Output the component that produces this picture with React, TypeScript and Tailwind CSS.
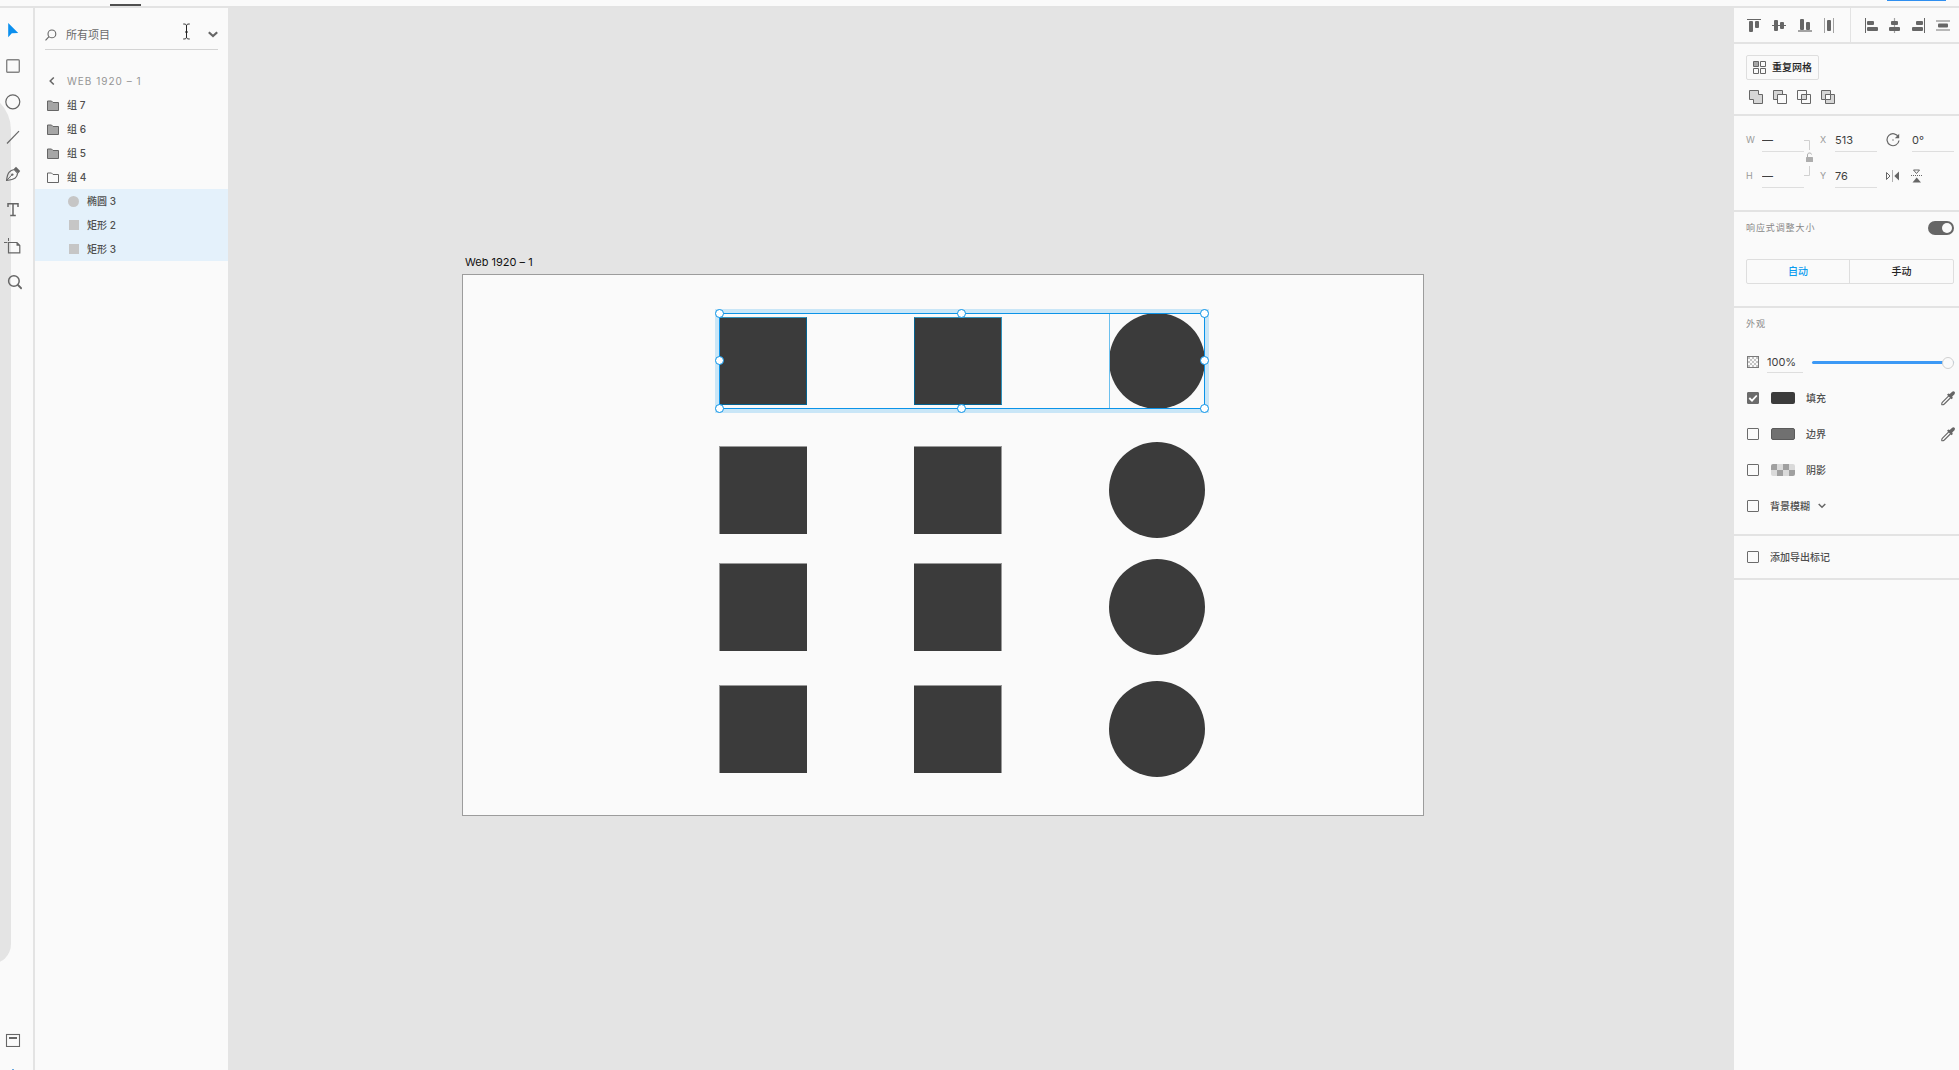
import React, { useState } from "react";

const G = "#666666";

type IconProps = { w: number; h: number; children: React.ReactNode };

function Icon({ w, h, children }: IconProps) {
  return (
    <svg width={w} height={h} viewBox={`0 0 ${w} ${h}`} fill="none" className="block shrink-0" aria-hidden="true">
      {children}
    </svg>
  );
}

const tools = [
  {
    name: "选择",
    pad: "pl-[5px]",
    icon: (
      <Icon w={16} h={16}>
        <path d="M3.2 1v14.2l3.6-3.9 6.4-.4z" fill="#0b8fee" />
      </Icon>
    ),
  },
  {
    name: "矩形",
    pad: "pl-[5px]",
    icon: (
      <Icon w={16} h={16}>
        <rect x="1.7" y="1.7" width="12.6" height="12.6" rx="1" stroke="#858585" strokeWidth="1.4" />
      </Icon>
    ),
  },
  {
    name: "椭圆",
    pad: "pl-[5px]",
    icon: (
      <Icon w={16} h={16}>
        <circle cx="7.8" cy="7.8" r="7" stroke={G} strokeWidth="1.2" />
      </Icon>
    ),
  },
  {
    name: "直线",
    pad: "pl-[5px]",
    icon: (
      <Icon w={16} h={16}>
        <path d="M2 13.5L14 1.2" stroke={G} strokeWidth="1.2" />
      </Icon>
    ),
  },
  {
    name: "钢笔",
    pad: "pl-[5px]",
    icon: (
      <Icon w={16} h={16}>
        <path d="M1.6 14.4C2 10.5 2.6 8 4 6.3c1.5-1.8 3.5-2.5 5.3-2.8l3.3 3.6c-.2 2-1 3.7-2.4 4.9-1.8 1.4-4.6 2-8.600 2.400z" stroke={G} strokeWidth="1.2" />
        <path d="M1.8 14.2L6.8 9" stroke={G} strokeWidth="1" />
        <circle cx="7.3" cy="8.600" r="1.2" fill={G} />
        <path d="M9 2.700L11 .8l4.200 4.300-1.700 2.200z" fill={G} />
      </Icon>
    ),
  },
  {
    name: "文本",
    pad: "pl-[5px]",
    icon: (
      <Icon w={16} h={16}>
        <path d="M3 5V1.800h10V5M8 1.800v11.800M5.200 13.600h5.600" stroke={G} strokeWidth="1.500" />
      </Icon>
    ),
  },
  {
    name: "画板",
    pad: "pl-1",
    icon: (
      <Icon w={18} h={16}>
        <path d="M0 4.500h3.400M4.500 0v3" stroke={G} strokeWidth="1" />
        <path d="M4.500 4.500h8.500l2.800 3v7.300H4.500z" stroke={G} strokeWidth="1.200" />
        <path d="M12.500 4.200v3.600h3.600z" fill={G} />
      </Icon>
    ),
  },
  {
    name: "缩放",
    pad: "pl-1.5",
    icon: (
      <Icon w={16} h={16}>
        <circle cx="7.900" cy="7" r="5.300" stroke={G} strokeWidth="1.500" />
        <path d="M11.700 10.800l4 3.900" stroke={G} strokeWidth="1.900" />
      </Icon>
    ),
  },
];

function Toolbar() {
  return (
    <nav aria-label="工具" className="relative flex w-[35px] shrink-0 flex-col overflow-hidden border-r-2 border-[#e3e3e3] pt-1">
      <div className="absolute -left-7 bottom-[106px] top-[83px] w-[39px] rounded-tr-[39px] rounded-br-[20px] bg-[#e4e4e4]" />
      {tools.map((t) => (
        <button key={t.name} type="button" aria-label={t.name} className={`relative flex h-9 w-full items-center ${t.pad}`}>
          {t.icon}
        </button>
      ))}
      <div className="mt-auto">
        <button type="button" aria-label="图层" className="flex h-9 w-full items-center pl-[5px]">
          <Icon w={16} h={14}>
            <rect x="1.500" y="1.500" width="13" height="12" stroke={G} strokeWidth="1.100" />
            <path d="M4 5h8" stroke={G} strokeWidth="2" />
          </Icon>
        </button>
        <div className="flex h-3 items-end pl-3">
          <span className="h-px w-0.5 bg-[#6aa8e0]" />
        </div>
      </div>
    </nav>
  );
}

function Folder({ open }: { open?: boolean }) {
  return (
    <Icon w={12} h={11}>
      <path d="M.5 1h4l1.500 1.500h5.500v8H.5z" fill={open ? "none" : "#a6a6a6"} stroke={G} strokeWidth="1" strokeLinejoin="round" />
    </Icon>
  );
}

const groups = [
  { name: "组 7", open: false },
  { name: "组 6", open: false },
  { name: "组 5", open: false },
  { name: "组 4", open: true },
];

const children = [
  { name: "椭圆 3", round: true },
  { name: "矩形 2", round: false },
  { name: "矩形 3", round: false },
];

function LayersPanel() {
  return (
    <aside className="flex w-[193px] shrink-0 flex-col">
      <div className="relative mx-[10px] mt-3 flex h-[30px] items-center border-b border-[#d4d4d4]">
        <Icon w={12} h={12}>
          <circle cx="6.900" cy="4.900" r="3.900" stroke={G} strokeWidth="1.100" />
          <path d="M4 7.700L.5 11.400" stroke={G} strokeWidth="1.100" />
        </Icon>
        <input
          aria-label="搜索图层"
          placeholder="所有项目"
          className="ml-[9px] min-w-0 flex-1 bg-transparent pt-0.5 text-[11px] text-[#6b6b6b] outline-none placeholder:text-[#6b6b6b]"
        />
        <button type="button" aria-label="筛选" className="flex h-5 w-[10px] items-center justify-center">
          <Icon w={10} h={7}>
            <path d="M.8 1.200L5 5l4.200-3.800" stroke={G} strokeWidth="2.200" />
          </Icon>
        </button>
        <div className="pointer-events-none absolute right-7 top-[3px]">
          <Icon w={7} h={17}>
            <path d="M.3 1c2 0 3.200.4 3.200 1.800v11.400c0 1.400-1.200 1.800-3.200 1.800M6.700 1c-2 0-3.200.4-3.200 1.800M6.700 16c-2 0-3.200-.4-3.200-1.800M2 9h3" stroke="#222" strokeWidth="1" />
          </Icon>
        </div>
      </div>
      <button type="button" className="mt-[19px] flex h-6 items-center pl-3.5 text-left">
        <Icon w={6} h={8}>
          <path d="M4.800.5L1.200 4l3.600 3.500" stroke={G} strokeWidth="1.500" />
        </Icon>
        <span className="ml-3 text-[10px] tracking-widest text-[#959595]">WEB 1920 – 1</span>
      </button>
      <ul>
        {groups.map((g) => (
          <li key={g.name}>
            <button type="button" className="flex h-6 w-full items-center gap-2 pl-3 text-[10px] font-medium text-[#4f4f4f]">
              <Folder open={g.open} />
              {g.name}
            </button>
          </li>
        ))}
        {children.map((c) => (
          <li key={c.name} className="bg-[#e4f1fb]">
            <button type="button" className="flex h-6 w-full items-center gap-2 pl-[33px] text-[10px] font-medium text-[#4f4f4f]">
              <span className="flex w-[11px] justify-center">
                <span className={c.round ? "size-[11px] rounded-full bg-[#c6c6c6]" : "size-[10px] bg-[#c6c6c6]"} />
              </span>
              {c.name}
            </button>
          </li>
        ))}
      </ul>
    </aside>
  );
}

function Handle({ place }: { place: string }) {
  return <span className={`absolute size-[9px] rounded-full border border-[#0b93e8] bg-white ${place}`} />;
}

const rowTops = ["top-[167px]", "top-[284px]", "top-[406px]"];

function Square({ first }: { first?: boolean }) {
  return <span className={`mt-1 size-[88px] border-t border-[#999] bg-[#3b3b3b] ${first ? "border-l" : "border-r"}`} />;
}

function Canvas() {
  return (
    <main className="relative min-w-0 flex-1 overflow-hidden bg-[#e4e4e4]">
      <div className="absolute left-[237px] top-[246px] text-[11px] leading-4 text-[#111]">Web 1920 – 1</div>
      <div className="absolute left-[234px] top-[266px] h-[542px] w-[962px] border border-[#9c9c9c] bg-[#fafafa]">
        {rowTops.map((top) => (
          <div key={top} className={`absolute left-[256px] flex w-[486px] justify-between ${top}`}>
            <Square first />
            <Square />
            <span className="size-24 rounded-full bg-[#3b3b3b]" />
          </div>
        ))}
        <div className="absolute left-[252px] top-[34px] border-4 border-[#c9e6f7]">
          <div className="relative h-24 w-[486px]">
            <div className="flex justify-between">
              <span className="mt-1 size-[88px] border border-[#04628f] border-t-[#2e92bd] bg-[#3b3b3b]" />
              <span className="mt-1 size-[88px] border border-[#04628f] border-r-[#2e92bd] border-t-[#2e92bd] bg-[#3b3b3b]" />
              <span className="relative size-24 rounded-full bg-[#3b3b3b]">
                <span className="absolute inset-y-0 left-0 w-px bg-[#6cc0ee]" />
              </span>
            </div>
            <div className="absolute inset-0 border border-[#0b93e8]" />
            <Handle place="-left-1 -top-1" />
            <Handle place="left-[238px] -top-1" />
            <Handle place="-right-1 -top-1" />
            <Handle place="-left-1 top-[43px]" />
            <Handle place="-right-1 top-[43px]" />
            <Handle place="-left-1 -bottom-1" />
            <Handle place="left-[238px] -bottom-1" />
            <Handle place="-right-1 -bottom-1" />
          </div>
        </div>
      </div>
    </main>
  );
}

const L = "#a3a3a3";

const alignVertical = [
  {
    name: "顶对齐",
    icon: (
      <Icon w={16} h={16}>
        <path d="M1 2.500h14" stroke={G} strokeWidth="1" />
        <rect x="3" y="4" width="4" height="11" rx="1" fill={G} />
        <rect x="9" y="4" width="4" height="7" rx="1" fill={G} />
      </Icon>
    ),
  },
  {
    name: "垂直居中",
    icon: (
      <Icon w={16} h={16}>
        <path d="M1 8.500h14" stroke={G} strokeWidth="1" />
        <rect x="3" y="3" width="4" height="11" rx="1" fill={G} />
        <rect x="9" y="5" width="4" height="7" rx="1" fill={G} />
      </Icon>
    ),
  },
  {
    name: "底对齐",
    icon: (
      <Icon w={16} h={16}>
        <path d="M2 14h14" stroke={L} strokeWidth="2" />
        <rect x="4" y="2" width="4" height="11" rx="1" fill={G} />
        <rect x="10" y="5" width="4" height="8" rx="1" fill={G} />
      </Icon>
    ),
  },
  {
    name: "水平分布",
    icon: (
      <Icon w={16} h={16}>
        <path d="M3.500 1v15M12.500 1v15" stroke={L} strokeWidth="1" />
        <rect x="6" y="3" width="4" height="11" rx="1" fill={G} />
      </Icon>
    ),
  },
];

const alignHorizontal = [
  {
    name: "左对齐",
    icon: (
      <Icon w={16} h={16}>
        <path d="M2.500 1v15" stroke={G} strokeWidth="1" />
        <rect x="4" y="4" width="7" height="4" rx="1" fill={G} />
        <rect x="4" y="10" width="11" height="4" rx="1" fill={G} />
      </Icon>
    ),
  },
  {
    name: "水平居中",
    icon: (
      <Icon w={16} h={16}>
        <path d="M7.500 1v15" stroke={L} strokeWidth="1.200" />
        <rect x="4" y="4" width="7" height="4" rx="1" fill={G} />
        <rect x="2" y="10" width="11" height="4" rx="1" fill={G} />
      </Icon>
    ),
  },
  {
    name: "右对齐",
    icon: (
      <Icon w={16} h={16}>
        <path d="M13.500 1v15" stroke={G} strokeWidth="1" />
        <rect x="5" y="4" width="7" height="4" rx="1" fill={G} />
        <rect x="1" y="10" width="11" height="4" rx="1" fill={G} />
      </Icon>
    ),
  },
  {
    name: "垂直分布",
    icon: (
      <Icon w={16} h={16}>
        <path d="M1 4h14M1 13h14" stroke={L} strokeWidth="1.400" />
        <rect x="3" y="6.500" width="10" height="4" rx="1" fill={G} />
      </Icon>
    ),
  },
];

const booleans = [
  {
    name: "相加",
    icon: (
      <Icon w={14} h={14}>
        <path d="M.5.500h9v4h4v9h-9v-4h-4z" fill="#d6d6d6" stroke={G} />
      </Icon>
    ),
  },
  {
    name: "减去",
    icon: (
      <Icon w={14} h={14}>
        <path d="M.5.500h9v9h-9z" fill="#d6d6d6" stroke={G} />
        <path d="M4.500 4.500h9v9h-9z" fill="#fafafa" stroke={G} />
      </Icon>
    ),
  },
  {
    name: "交叉",
    icon: (
      <Icon w={14} h={14}>
        <path d="M4.500 4.500h5v5h-5z" fill="#d6d6d6" />
        <path d="M.5.500h9v9h-9zM4.500 4.500h9v9h-9z" stroke={G} />
      </Icon>
    ),
  },
  {
    name: "排除重叠",
    icon: (
      <Icon w={14} h={14}>
        <path d="M.5.500h9v9h-9zM4.500 4.500h9v9h-9z" fill="#d6d6d6" stroke={G} />
        <path d="M4.500 4.500h5v5h-5z" fill="#fafafa" stroke={G} />
      </Icon>
    ),
  },
];

const fieldInput = "h-[22px] w-full border-b border-[#dedede] bg-transparent pb-0.5 text-[11px] text-[#3f3f3f] outline-none";

function Field({ id, label, value }: { id: string; label: string; value: string }) {
  return (
    <>
      <label htmlFor={id} className="pb-0.5 text-[9px] text-[#999]">
        {label}
      </label>
      <input id={id} defaultValue={value} className={fieldInput} />
    </>
  );
}

function Tick({ id, checked, onChange }: { id: string; checked: boolean; onChange: () => void }) {
  return (
    <span className="grid size-3 shrink-0 place-items-center">
      <input
        id={id}
        type="checkbox"
        checked={checked}
        onChange={onChange}
        className="col-start-1 row-start-1 size-3 appearance-none rounded-[1px] border border-[#6b6b6b] checked:bg-[#6b6b6b]"
      />
      {checked && (
        <svg width="12" height="12" viewBox="0 0 12 12" fill="none" className="pointer-events-none col-start-1 row-start-1">
          <path d="M2.300 6l2.700 2.700L9.800 3.500" stroke="#fff" strokeWidth="1.800" />
        </svg>
      )}
    </span>
  );
}

function Eyedropper() {
  return (
    <button type="button" aria-label="吸管" className="-mr-px ml-auto">
      <Icon w={14} h={15}>
        <path d="M8 4.700L1.500 11.200c-.7.800-.9 1.600-.7 2.500.9.300 1.700 0 2.500-.7L9.800 6.500" stroke={G} strokeWidth="1.100" />
        <path d="M6 3.700l1.400-1.200 1.300.5L10.900.9c.8-.9 2-1 2.600-.2.700.7.600 1.900-.2 2.700L11.200 5.600l.6 1.400L10.600 8.300z" fill={G} />
      </Icon>
    </button>
  );
}

function Checker({ cols, rows, size, a, b }: { cols: number; rows: number; size: number; a: string; b: string }) {
  const cells = [];
  for (let y = 0; y < rows; y++)
    for (let x = 0; x < cols; x++)
      cells.push(<rect key={`${x}-${y}`} x={x * size} y={y * size} width={size} height={size} fill={(x + y) % 2 ? b : a} />);
  return (
    <Icon w={cols * size} h={rows * size}>
      {cells}
    </Icon>
  );
}

const section = "border-b-2 border-[#e3e3e3] pl-3 pr-[5px]";
const row = "flex h-9 items-center pl-px text-[10px] font-medium text-[#4f4f4f]";
const sectionLabel = "text-[9px] tracking-widest text-[#888]";

function Inspector() {
  const [on, setOn] = useState<Record<string, boolean>>({ fill: true });
  const toggle = (k: string) => setOn((s) => ({ ...s, [k]: !s[k] }));
  const [responsive, setResponsive] = useState(true);
  const [opacity, setOpacity] = useState(100);

  return (
    <aside className="flex w-[225px] shrink-0 flex-col">
      <div className="flex h-9 border-b-2 border-[#e3e3e3]">
        <div className="flex w-[117px] items-center gap-[9px] border-r border-[#e3e3e3] pl-3">
          {alignVertical.map((a) => (
            <button key={a.name} type="button" aria-label={a.name}>
              {a.icon}
            </button>
          ))}
        </div>
        <div className="flex items-center gap-2 pl-3">
          {alignHorizontal.map((a) => (
            <button key={a.name} type="button" aria-label={a.name}>
              {a.icon}
            </button>
          ))}
        </div>
      </div>

      <section className={`${section} h-[72px] pt-[11px]`}>
        <button type="button" className="flex h-[25px] items-center gap-[6px] rounded-xs border border-[#dedede] px-1.5 text-[10px] font-medium text-[#222]">
          <Icon w={13} h={13}>
            <path d="M.5.500h5v5h-5z" fill="#a6a6a6" stroke={G} />
            <path d="M7.500.500h5v5h-5zM.5 7.500h5v5h-5zM7.500 7.500h5v5h-5z" stroke={G} />
          </Icon>
          重复网格
        </button>
        <div className="mt-[10px] flex gap-[10px] pl-[3px]">
          {booleans.map((b) => (
            <button key={b.name} type="button" aria-label={b.name}>
              {b.icon}
            </button>
          ))}
        </div>
      </section>

      <section className={`${section} h-24 pt-3.5`}>
        <div className="grid grid-cols-[16px_42px_16px_15px_42px_35px_1fr] items-center gap-y-3.5">
          <Field id="w" label="W" value="—" />
          <div className="row-span-2">
            <Icon w={16} h={44}>
              <path d="M0 3.500h5.500V13M0 38.500h5.500V29" stroke="#d0d0d0" />
              <rect x="2" y="20" width="7" height="5" rx=".5" fill="#adadad" />
              <path d="M3.500 20v-2c0-1.500 1-2 2-2s2 .5 2 1.500" stroke="#adadad" />
            </Icon>
          </div>
          <Field id="x" label="X" value="513" />
          <label htmlFor="angle" aria-label="旋转" className="pb-0.5 pl-[9px]">
            <Icon w={14} h={14}>
              <path d="M12.500 4.200A6 6 0 1 0 13 7.500" stroke={G} strokeWidth="1.200" />
              <path d="M13.200.8v4.400H8.800z" fill={G} />
              <circle cx="7" cy="7" r=".7" fill={G} />
            </Icon>
          </label>
          <input id="angle" defaultValue="0°" className={fieldInput} />
          <Field id="h" label="H" value="—" />
          <Field id="y" label="Y" value="76" />
          <button type="button" aria-label="水平翻转" className="pb-0.5 pl-[9px]">
            <Icon w={14} h={12}>
              <path d="M.5 2.500L4 6 .5 9.500z" stroke={G} />
              <path d="M13 1.500v9L8.300 6z" fill={G} />
              <path d="M6.500.500v11" stroke={G} strokeDasharray="1 1" />
            </Icon>
          </button>
          <button type="button" aria-label="垂直翻转" className="-ml-px pb-0.5">
            <Icon w={12} h={14}>
              <path d="M2.500 1h6L5.500 4.500z" stroke={G} />
              <path d="M1.500 13.500h8.500L5.700 8.500z" fill={G} />
              <path d="M0 6.500h12" stroke={G} strokeDasharray="1 1" />
            </Icon>
          </button>
        </div>
      </section>

      <section className={`${section} h-24 pt-2`}>
        <div className={`flex h-4 items-center justify-between ${sectionLabel}`}>
          <label htmlFor="responsive">响应式调整大小</label>
          <span className="grid h-3.5 w-[26px] items-center">
            <input
              id="responsive"
              type="checkbox"
              role="switch"
              checked={responsive}
              onChange={() => setResponsive(!responsive)}
              className="peer col-start-1 row-start-1 h-3.5 w-[26px] appearance-none rounded-full bg-[#b5b5b5] checked:bg-[#666]"
            />
            <span className="pointer-events-none col-start-1 row-start-1 ml-0.5 size-[10px] rounded-full bg-[#fafafa] peer-checked:ml-3.5" />
          </span>
        </div>
        <div className="mt-[23px] grid h-[25px] grid-cols-2 rounded-xs border border-[#dedede] text-[10px] font-medium">
          <button type="button" className="border-r border-[#dedede] text-[#0b9cf0]">
            自动
          </button>
          <button type="button" className="text-[#222]">
            手动
          </button>
        </div>
      </section>

      <section className={`${section} h-[228px] pt-2`}>
        <h2 className={`h-4 leading-4 ${sectionLabel}`}>外观</h2>
        <div className="mt-3 flex h-9 items-center pl-px">
          <span className="border border-[#7a7a7a]">
            <Checker cols={5} rows={5} size={2} a="#c4c4c4" b="#fafafa" />
          </span>
          <input
            aria-label="不透明度"
            value={`${opacity}%`}
            onChange={(e) => setOpacity(Math.min(100, parseInt(e.target.value) || 0))}
            className="ml-2 h-[22px] w-9 border-b border-[#dedede] bg-transparent text-[11px] text-[#3f3f3f] outline-none"
          />
          <input
            aria-label="不透明度滑块"
            type="range"
            value={opacity}
            onChange={(e) => setOpacity(Number(e.target.value))}
            className="ml-[9px] h-3 min-w-0 flex-1 appearance-none bg-transparent [&::-webkit-slider-runnable-track]:h-[3px] [&::-webkit-slider-runnable-track]:rounded-full [&::-webkit-slider-runnable-track]:bg-[#3c99f5] [&::-webkit-slider-thumb]:-mt-1 [&::-webkit-slider-thumb]:size-3 [&::-webkit-slider-thumb]:appearance-none [&::-webkit-slider-thumb]:rounded-full [&::-webkit-slider-thumb]:border [&::-webkit-slider-thumb]:border-[#d0d0d0] [&::-webkit-slider-thumb]:bg-[#fafafa]"
          />
        </div>
        <div className={row}>
          <Tick id="fill" checked={!!on.fill} onChange={() => toggle("fill")} />
          <button type="button" aria-label="填充颜色" className="ml-3 h-3 w-6 rounded-xs bg-[#3b3b3b]" />
          <label htmlFor="fill" className="ml-[11px]">填充</label>
          <Eyedropper />
        </div>
        <div className={row}>
          <Tick id="stroke" checked={!!on.stroke} onChange={() => toggle("stroke")} />
          <button type="button" aria-label="边界颜色" className="ml-3 h-3 w-6 rounded-xs border border-[#5a5a5a] bg-[#707070]" />
          <label htmlFor="stroke" className="ml-[11px]">边界</label>
          <Eyedropper />
        </div>
        <div className={row}>
          <Tick id="shadow" checked={!!on.shadow} onChange={() => toggle("shadow")} />
          <button type="button" aria-label="阴影颜色" className="ml-3 h-3 w-6 overflow-hidden rounded-xs">
            <Checker cols={4} rows={2} size={6} a="#a0a0a0" b="#dadada" />
          </button>
          <label htmlFor="shadow" className="ml-[11px]">阴影</label>
        </div>
        <div className={row}>
          <Tick id="blur" checked={!!on.blur} onChange={() => toggle("blur")} />
          <label htmlFor="blur" className="ml-[11px]">背景模糊</label>
          <button type="button" aria-label="模糊类型" className="ml-2">
            <Icon w={8} h={6}>
              <path d="M.7 1L4 4.300 7.300 1" stroke={G} strokeWidth="1.500" />
            </Icon>
          </button>
        </div>
      </section>

      <section className={`${section} h-11 pt-[3px]`}>
        <div className={row}>
          <Tick id="export" checked={!!on.export} onChange={() => toggle("export")} />
          <label htmlFor="export" className="ml-[11px]">添加导出标记</label>
        </div>
      </section>
    </aside>
  );
}

export default function App() {
  return (
    <div className="flex h-screen flex-col overflow-hidden bg-[#fafafa] font-['Inter','Noto_Sans_CJK_SC',sans-serif]">
      <header className="flex h-2 shrink-0 items-end border-b-2 border-[#e3e3e3]">
        <span className="ml-[110px] h-0.5 w-[31px] bg-[#4f4f4f]" />
        <span className="ml-auto mr-[13px] h-px w-[59px] self-start bg-[#2f8ff0]" />
      </header>
      <div className="flex min-h-0 flex-1">
        <Toolbar />
        <LayersPanel />
        <Canvas />
        <Inspector />
      </div>
    </div>
  );
}
